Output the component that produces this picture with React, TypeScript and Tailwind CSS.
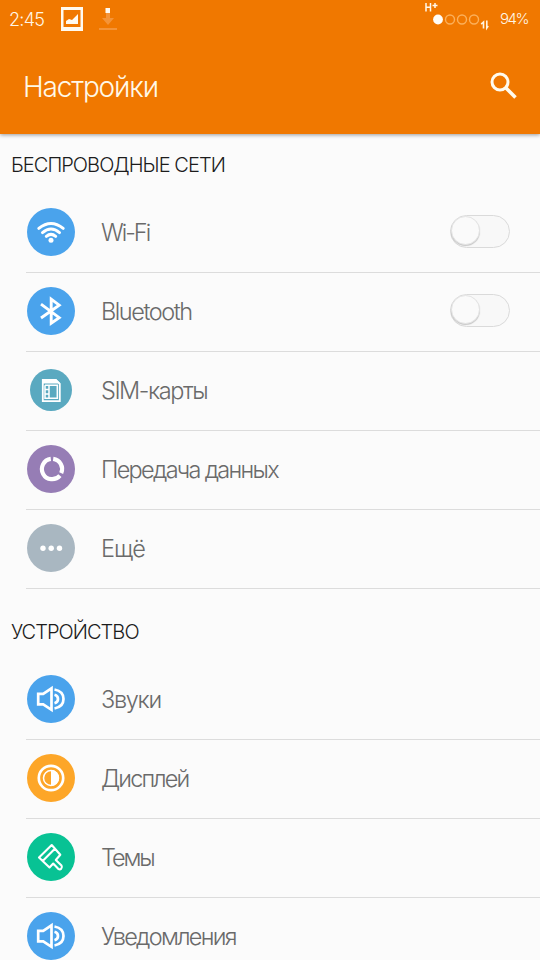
import type { ReactNode } from 'react';

function StatusBar() {
  return (
    <div className="flex h-[38px] items-center pl-[9px] pr-[12px] text-[#fff6e6]">
      <span className="w-[52px] pt-[2px] text-[18px] font-[350] leading-[38px] tracking-[-0.7px]">2:45</span>
      <svg className="h-[24px] w-[22px]" viewBox="0 0 22 24">
        <path fillRule="evenodd" fill="#fffaf0" d="M0 0h22v24H0z M2.500 3v17h17V3z" />
        <path fill="#fffaf0" d="M5 17v-3l3-2 3 1 6-6v10z" />
      </svg>
      <svg className="ml-[15px] h-[24px] w-[20px]" viewBox="0 0 20 24">
        <path fill="#f49438" d="M8 6h4v5h4l-6 7-6-7h4z M1 21h18v2H1z" />
        <path fill="#fffaf0" d="M7.500 1h4.500v5H7.500z" />
      </svg>
      <svg className="ml-auto h-[38px] w-[66px]" viewBox="424 0 66 38" fill="none">
        <path d="M426 3v8.500M430.500 3v8.500M426 7.200h4.500M432.500 5.500h5M435 3v5" stroke="#fff8ea" strokeWidth="1.500" />
        <circle cx="438" cy="19.500" r="4.900" fill="#fffdf8" />
        <circle cx="450" cy="19.500" r="4.500" stroke="#fbb05a" strokeWidth="1.400" />
        <circle cx="462" cy="19.500" r="4.500" stroke="#fbb05a" strokeWidth="1.400" />
        <circle cx="474" cy="19.500" r="4.500" stroke="#fbb05a" strokeWidth="1.400" />
        <path d="M483.500 28.500V22l-2.300 2.200M486.800 20.500v7.500l1.400-2" stroke="#fff3df" strokeWidth="1.600" />
      </svg>
      <span className="ml-[10px] w-[28px] whitespace-nowrap text-[15px] font-[350] leading-[38px] tracking-[-1.500px]">
        94%
      </span>
    </div>
  );
}

function AppBar() {
  return (
    <header className="relative z-10 h-[134px] shrink-0 bg-[#f07800] shadow-[0_1px_4px_rgba(0,0,0,0.4)]">
      <StatusBar />
      <div className="flex h-[96px] items-center justify-between pl-[23px] pr-[22px]">
        <h1 className="pt-px text-[28px] font-[350] tracking-[-1.150px] text-[#fff8e8]">Настройки</h1>
        <svg className="h-[28px] w-[28px]" viewBox="0 0 28 28" fill="none" stroke="#fffbee">
          <circle cx="10" cy="10" r="8" strokeWidth="3" />
          <path d="M16 16l9.500 9.500" strokeWidth="3.600" />
        </svg>
      </div>
    </header>
  );
}

function Toggle() {
  return (
    <span className="mb-[2px] flex h-[33px] w-[60px] rounded-full border border-[#dadada] bg-[#f8f8f8]">
      <span className="h-[29px] w-[29px] rounded-full border border-[#e4e4e4] bg-[#fafafa] shadow-[0_1px_1px_rgba(0,0,0,0.2)]" />
    </span>
  );
}

function Glyph({ children }: { children: ReactNode }) {
  return (
    <svg className="h-[48px] w-[48px]" viewBox="0 0 48 48" fill="none" stroke="white">
      {children}
    </svg>
  );
}

const wifi = (
  <Glyph>
    <g strokeWidth="3" strokeLinecap="round">
      <path d="M11.800 20.400Q24 10.500 36.200 20.400" />
      <path d="M15.500 24.600Q24 17.400 32.500 24.600" />
      <path d="M19.300 28.400Q24 24.400 28.700 28.400" />
    </g>
    <circle cx="24" cy="32.200" r="2.500" fill="white" stroke="none" />
  </Glyph>
);

const bluetooth = (
  <Glyph>
    <path strokeWidth="2.900" d="M14 17.200L32.200 30.600 24.200 36.200V12.200L32.200 18.200 14 31" />
  </Glyph>
);

const sim = (
  <Glyph>
    <path d="M15.800 13.800h13l4 4v17.400h-17z" strokeWidth="1.800" />
    <path fill="white" stroke="none" d="M15 13h14l4.500 4.500H15z" />
    <path d="M22 19.500v12.500M18 19.200h12.300v13H18V19.200M18 23.500h4M18 28h4" strokeWidth="1.500" />
  </Glyph>
);

const dataUsage = (
  <Glyph>
    <path strokeWidth="4.200" d="M23.800 13.900A10.200 10.200 0 1 0 32.900 30.600M26.200 13.900A10.200 10.200 0 0 1 34.200 28.200" />
  </Glyph>
);

const more = (
  <Glyph>
    <g fill="white" stroke="none">
      <circle cx="16" cy="24.300" r="2.700" />
      <circle cx="24.200" cy="24.300" r="2.700" />
      <circle cx="32.500" cy="24.300" r="2.700" />
    </g>
  </Glyph>
);

const speaker = (
  <Glyph>
    <path strokeWidth="2.700" d="M11.200 18.800h5l8.300-5.500v21.500l-8.300-5.500h-5z" />
    <path strokeWidth="2.700" d="M27.500 19.800q3.500 1 3.500 4.200t-3.500 4.200M27.500 14.500q9 1.700 9 9.500t-9 9.500" />
  </Glyph>
);

const display = (
  <Glyph>
    <circle cx="24" cy="24" r="12.200" strokeWidth="2.700" />
    <circle cx="24" cy="24" r="7.500" strokeWidth="1.500" />
    <path fill="white" stroke="none" d="M24 16a8 8 0 0 1 0 16z" />
  </Glyph>
);

const brush = (
  <Glyph>
    <path
      strokeWidth="2.100"
      strokeLinejoin="round"
      d="M24.700 12L12 24.500l10.500 10 3.700-4 5 5.300q1.700 1.200 3-.1t.3-3.100L28.800 27l4.500-5.200z M28.300 15.300L15.700 28"
    />
  </Glyph>
);

type Item = { label: string; color: string; icon: ReactNode; track: string; toggle?: boolean; small?: boolean };

const network: Item[] = [
  { label: 'Wi-Fi', color: 'bg-[#4aa3ec]', icon: wifi, track: 'tracking-[-2px]', toggle: true },
  { label: 'Bluetooth', color: 'bg-[#4aa3ec]', icon: bluetooth, track: 'tracking-[-1.450px]', toggle: true },
  { label: 'SIM-карты', color: 'bg-[#5aa9c0]', icon: sim, track: 'tracking-[-1.450px]', small: true },
  { label: 'Передача данных', color: 'bg-[#967db5]', icon: dataUsage, track: 'tracking-[-1.700px]' },
  { label: 'Ещё', color: 'bg-[#a9b7c1]', icon: more, track: 'tracking-[-0.900px]' },
];

const device: Item[] = [
  { label: 'Звуки', color: 'bg-[#4aa3ec]', icon: speaker, track: 'tracking-[-1.300px]' },
  { label: 'Дисплей', color: 'bg-[#fda628]', icon: display, track: 'tracking-[-1.850px]' },
  { label: 'Темы', color: 'bg-[#08c294]', icon: brush, track: 'tracking-[-2.100px]' },
  { label: 'Уведомления', color: 'bg-[#4aa3ec]', icon: speaker, track: 'tracking-[-1.700px]' },
];

function Row({ item }: { item: Item }) {
  return (
    <li className="ml-[26px] flex h-[79px] items-center border-b border-[#dcdcdc] pb-[2px] pl-px pr-[30px]">
      <span className="flex w-[48px] justify-center">
        <span
          className={`flex shrink-0 items-center justify-center rounded-full ${item.color} ${
            item.small ? 'h-[42px] w-[42px]' : 'h-[48px] w-[48px]'
          }`}
        >
          <span className="-m-[3px] shrink-0">{item.icon}</span>
        </span>
      </span>
      <span
        className={`ml-[26px] flex-1 whitespace-nowrap pt-px text-[23.500px] font-[350] text-[#6a6a6a] ${item.track}`}
      >
        {item.label}
      </span>
      {item.toggle && <Toggle />}
    </li>
  );
}

export default function App() {
  return (
    <div className="flex h-screen w-full flex-col overflow-hidden bg-[#fbfbfb] font-['Inter','Liberation_Sans',sans-serif] font-light">
      <AppBar />
      <main>
        <h2 className="h-[60px] pl-[11px] text-[20px] font-[350] leading-[63px] tracking-[-0.950px] text-[#1c1c1c]">
          БЕСПРОВОДНЫЕ СЕТИ
        </h2>
        <ul>
          {network.map((item) => (
            <Row key={item.label} item={item} />
          ))}
        </ul>
        <h2 className="h-[72px] pl-[11px] text-[20px] font-[350] leading-[87px] tracking-[-0.950px] text-[#1c1c1c]">
          УСТРОЙСТВО
        </h2>
        <ul>
          {device.map((item) => (
            <Row key={item.label} item={item} />
          ))}
        </ul>
      </main>
    </div>
  );
}
